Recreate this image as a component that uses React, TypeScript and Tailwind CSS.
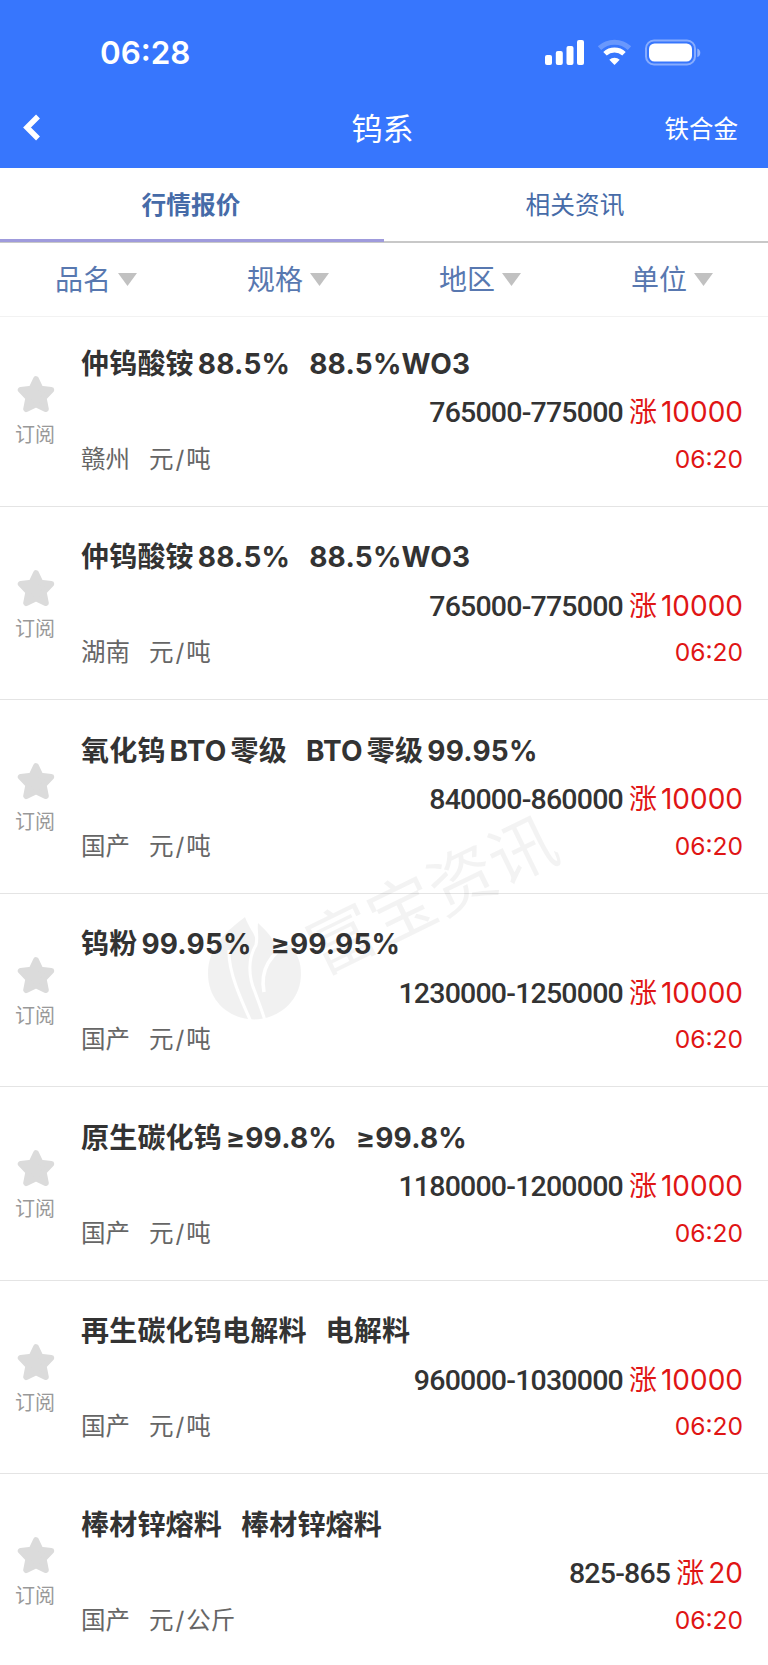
interface Quote {
  name: string
  spec: string
  area: string
  unit: string
  price: string
  change: string
  time: string
}

const quotes: Quote[] = [
  { name: '仲钨酸铵88.5%', spec: '88.5%WO3', area: '赣州', unit: '元/吨', price: '765000-775000', change: '10000', time: '06:20' },
  { name: '仲钨酸铵88.5%', spec: '88.5%WO3', area: '湖南', unit: '元/吨', price: '765000-775000', change: '10000', time: '06:20' },
  { name: '氧化钨BTO零级', spec: 'BTO零级99.95%', area: '国产', unit: '元/吨', price: '840000-860000', change: '10000', time: '06:20' },
  { name: '钨粉99.95%', spec: '≥99.95%', area: '国产', unit: '元/吨', price: '1230000-1250000', change: '10000', time: '06:20' },
  { name: '原生碳化钨≥99.8%', spec: '≥99.8%', area: '国产', unit: '元/吨', price: '1180000-1200000', change: '10000', time: '06:20' },
  { name: '再生碳化钨电解料', spec: '电解料', area: '国产', unit: '元/吨', price: '960000-1030000', change: '10000', time: '06:20' },
  { name: '棒材锌熔料', spec: '棒材锌熔料', area: '国产', unit: '元/公斤', price: '825-865', change: '20', time: '06:20' },
]

const filters = ['品名', '规格', '地区', '单位']

function StatusIcons() {
  return (
    <svg className="mt-px" width="160" height="28" viewBox="0 0 160 28" fill="#fff">
      <rect x="1" y="16" width="7" height="10" rx="2" />
      <rect x="11.8" y="12" width="7" height="14" rx="2" />
      <rect x="22.5" y="7" width="7" height="19" rx="2" />
      <rect x="33" y="1" width="7" height="25" rx="2" />
      <g fill="none" stroke="#fff" strokeWidth="5">
        <path d="M55.5 9.2 A22 22 0 0 1 85.5 9.2" opacity="0.25" />
        <path d="M61 14.8 A13.8 13.8 0 0 1 80 14.8" />
      </g>
      <path d="M70.5 26 L65.3 20.8 A7.4 7.4 0 0 1 75.7 20.8 Z" />
      <rect x="102" y="1.500" width="49" height="24" rx="8" fill="none" stroke="#fff" strokeWidth="2" opacity="0.4" />
      <rect x="105" y="4.500" width="43" height="18" rx="5.5" />
      <path d="M153.3 9.4 C157.3 10.5 157.3 17 153.3 18.1 Z" opacity="0.45" />
    </svg>
  )
}

// puts a thin gap between Chinese and Latin runs
function MixedText({ text }: { text: string }) {
  const runs = text.match(/[\u4e00-\u9fff]+|[^\u4e00-\u9fff]+/g) || []
  return (
    <span className="flex items-center gap-[4px]">
      {runs.map((run, i) => (
        <span key={i}>{run}</span>
      ))}
    </span>
  )
}

function QuoteRow({ quote }: { quote: Quote }) {
  const [currency, weight] = quote.unit.split('/')

  return (
    <li className="flex h-[193.55px] border-b border-[#e4e4e4]">
      <button className="flex w-[81px] shrink-0 flex-col items-start pt-[62px] pl-[15px] text-[20px] leading-7 text-[#999]">
        <svg className="ml-[2px] h-[38px] w-[38px]" viewBox="0 0 38 38">
          <path
            d="M19 4.2 L23.5 13.7 L34.2 15 L26.6 22.9 L28.8 34 L19 29.3 L9.2 34 L11.4 22.9 L3.8 15 L14.5 13.7 Z"
            fill="#dbdbdb"
            stroke="#dbdbdb"
            strokeWidth="6"
            strokeLinejoin="round"
          />
        </svg>
        <span className="mt-[8px]">订阅</span>
      </button>
      <div className="flex flex-1 flex-col pt-[30px] pr-[25px]">
        <div className="flex h-10 items-center gap-[19px] pt-px text-[28px] font-bold tracking-[0.2px] text-[#333]">
          <MixedText text={quote.name} />
          <MixedText text={quote.spec} />
        </div>
        <div className="mt-[9px] flex h-10 items-center justify-end gap-[6px] text-[28px] text-[#e01515]">
          <span className="pt-[3px] font-[Roboto] text-[28.5px] font-medium tracking-[-0.8px] text-[#333]">{quote.price}</span>
          <MixedText text={`涨${quote.change}`} />
        </div>
        <div className="mt-[7px] flex h-10 items-center justify-between text-[24.5px] text-[#666]">
          <span className="flex gap-[19px]">
            <span>{quote.area}</span>
            <span className="flex">
              {currency}
              <span className="px-[2px]">/</span>
              {weight}
            </span>
          </span>
          <span className="text-[24.6px] text-[#e01515]">{quote.time}</span>
        </div>
      </div>
    </li>
  )
}

function Watermark() {
  return (
    <div className="pointer-events-none absolute top-[780px] left-[170px]">
      <svg className="overflow-visible" width="430" height="260" viewBox="-20 -20 430 260">
        <mask id="leaf-veins">
          <rect x="0" y="100" width="130" height="130" fill="#fff" />
          <g fill="none" stroke="#000">
            <path d="M39 150 C38 172 52 202 62 224" strokeWidth="3" />
            <path d="M65 118 C66 130 68 136 66 145 C58 158 58 176 65 192 C69 203 73 213 76 224" strokeWidth="3" />
            <path d="M104 140 C78 154 70 172 74 192" strokeWidth="3.5" />
          </g>
        </mask>
        <path
          mask="url(#leaf-veins)"
          fill="#000"
          opacity="0.05"
          d="M55 117 C38 130 18 146 18 174 C18 200 38 219 64 219.5 C90 219 111 200 111 174 C111 163 108 155 102 148 L101 140 L84 150 C85 138 78 133 68 123 L66 140 C64 132 59 128 55 117 Z"
        />
        <text
          x="242"
          y="119"
          textAnchor="middle"
          className="font-['Noto_Sans_CJK_SC'] text-[67px]"
          fill="#000"
          opacity="0.045"
          transform="rotate(-26 242 95)"
        >
          富宝资讯
        </text>
      </svg>
    </div>
  )
}

export default function App() {
  return (
    <div className="relative h-[1665px] w-[768px] overflow-hidden bg-white font-['Inter','Noto_Sans_CJK_SC',sans-serif]">
      <header className="h-[167.5px] bg-[#3776fd] text-white">
        <div className="flex h-[88px] items-center justify-between pt-[16px] pr-[64px] pl-[100px]">
          <span className="pt-[3px] text-[31.4px] font-semibold">06:28</span>
          <StatusIcons />
        </div>
        <div className="grid h-20 grid-cols-3 items-center px-[24px]">
          <svg className="-ml-px" width="18" height="28" viewBox="0 0 18 28" fill="none" stroke="#fff" strokeWidth="5.5">
            <path d="M15 2.5 L4 13.5 L15 24.5" />
          </svg>
          <h1 className="-ml-[3px] pt-[2px] text-center text-[31px]">钨系</h1>
          <span className="pt-[2px] pr-[6px] text-right text-[24.5px]">铁合金</span>
        </div>
      </header>

      <nav className="grid h-[75.5px] grid-cols-2 border-b-2 border-[#c8c8c8] text-center text-[24.7px] leading-[74px] text-[#466ba8]">
        <button className="-mb-[1px] h-[74.5px] border-b-[3px] border-[#9f9bdc] pr-[2px] font-semibold">行情报价</button>
        <button className="h-[73px] pr-[2px]">相关资讯</button>
      </nav>

      <div className="grid h-[74px] grid-cols-4 border-b border-[#f2f2f2]">
        {filters.map((label) => (
          <button key={label} className="flex items-center justify-center gap-[7px] text-[28px] text-[#5878b0]">
            <span className="pt-px">{label}</span>
            <svg width="19" height="13" viewBox="0 0 19 13">
              <path d="M0 0 H19 L9.5 13 Z" fill="#c1c1c1" />
            </svg>
          </button>
        ))}
      </div>

      <ul className="-mt-[4px]">
        {quotes.map((quote, i) => (
          <QuoteRow key={i} quote={quote} />
        ))}
      </ul>

      <Watermark />
    </div>
  )
}
